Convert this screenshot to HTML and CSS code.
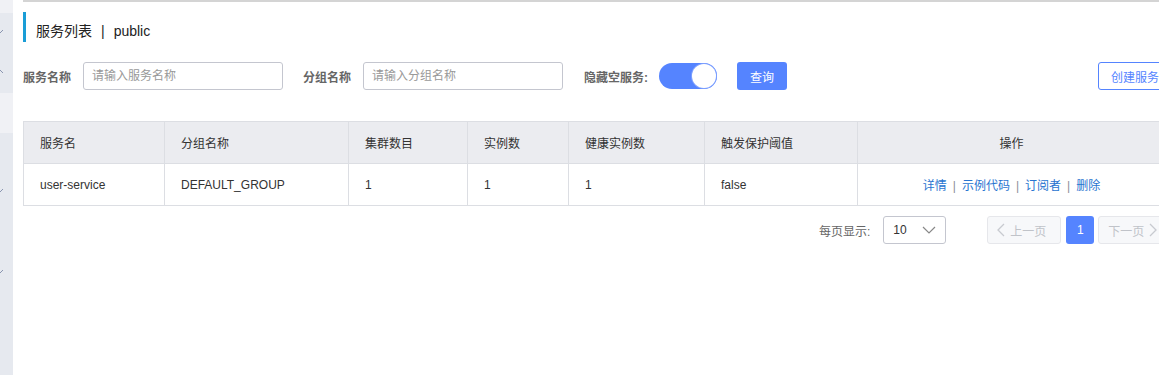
FILE: index.html
```html
<!DOCTYPE html>
<html lang="zh-CN">
<head>
  <meta charset="UTF-8">
  <title>服务列表</title>
  <link rel="stylesheet" href="styles.css">
</head>
<body>
  <div class="layout">
    <aside class="sidebar">
      <div class="band light" style="height:13px"></div>
      <div class="band dark" style="height:80px">
        <svg class="arrow" style="top:16px" width="6" height="6" viewBox="0 0 6 6"><path d="M-3 1 L0 4 L3 1" fill="none" stroke="#8a95b0" stroke-width="1"/></svg>
        <svg class="arrow" style="top:56px" width="6" height="6" viewBox="0 0 6 6"><path d="M-3 4 L0 1 L3 4" fill="none" stroke="#8a95b0" stroke-width="1"/></svg>
      </div>
      <div class="band light" style="height:40px"></div>
      <div class="band dark fill">
        <svg class="arrow" style="top:55px" width="6" height="6" viewBox="0 0 6 6"><path d="M-3 1 L0 4 L3 1" fill="none" stroke="#8a95b0" stroke-width="1"/></svg>
        <svg class="arrow" style="top:136px" width="6" height="6" viewBox="0 0 6 6"><path d="M-3 1 L0 4 L3 1" fill="none" stroke="#8a95b0" stroke-width="1"/></svg>
      </div>
    </aside>

    <main class="main">
      <div class="topline"></div>

      <h1 class="page-title">服务列表<span class="sep">|</span>public</h1>

      <div class="filters">
        <label class="field-label">服务名称</label>
        <input class="input" type="text" placeholder="请输入服务名称">
        <label class="field-label">分组名称</label>
        <input class="input" type="text" placeholder="请输入分组名称">
        <label class="field-label switch-label">隐藏空服务:</label>
        <span class="switch"><span class="knob"></span></span>
        <button class="btn primary">查询</button>
        <button class="btn outline create">创建服务</button>
      </div>

      <table class="table">
        <thead>
          <tr>
            <th class="c1">服务名</th>
            <th class="c2">分组名称</th>
            <th class="c3">集群数目</th>
            <th class="c4">实例数</th>
            <th class="c5">健康实例数</th>
            <th class="c6">触发保护阈值</th>
            <th class="c7 center">操作</th>
          </tr>
        </thead>
        <tbody>
          <tr>
            <td>user-service</td>
            <td>DEFAULT_GROUP</td>
            <td>1</td>
            <td>1</td>
            <td>1</td>
            <td>false</td>
            <td class="center ops">
              <a href="#">详情</a><span class="bar">|</span><a href="#">示例代码</a><span class="bar">|</span><a href="#">订阅者</a><span class="bar">|</span><a href="#">删除</a>
            </td>
          </tr>
        </tbody>
      </table>

      <div class="pager">
        <span class="pager-label">每页显示:</span>
        <div class="select">
          <span>10</span>
          <svg width="14" height="8" viewBox="0 0 14 8"><path d="M1 1 L7 7 L13 1" fill="none" stroke="#888" stroke-width="1.2"/></svg>
        </div>
        <button class="page-btn disabled prev">
          <svg width="8" height="14" viewBox="0 0 8 14"><path d="M7 1 L1 7 L7 13" fill="none" stroke="#c8cad0" stroke-width="1.3"/></svg>
          上一页
        </button>
        <button class="page-btn current">1</button>
        <button class="page-btn disabled next">
          下一页
          <svg width="8" height="14" viewBox="0 0 8 14"><path d="M1 1 L7 7 L1 13" fill="none" stroke="#c8cad0" stroke-width="1.3"/></svg>
        </button>
      </div>
    </main>
  </div>
</body>
</html>
```

FILE: styles.css
```css
html, body {
  margin: 0;
  padding: 0;
  background: #fff;
  overflow: hidden;
}

body {
  font-family: "Liberation Sans", "Noto Sans CJK SC", sans-serif;
  font-size: 12px;
  color: #333;
}

.layout {
  display: flex;
  width: 1166px;
  height: 375px;
}

/* left menu, mostly scrolled out of view */
.sidebar {
  width: 13px;
  flex-shrink: 0;
  display: flex;
  flex-direction: column;
}

.band {
  position: relative;
}

.band.light {
  background: #f0f1f5;
}

.band.dark {
  background: #e6e9ef;
}

.band.fill {
  flex: 1;
}

.arrow {
  position: absolute;
  left: 0;
}

.main {
  flex: 1;
  padding: 0 0 0 10px;
  min-width: 0;
}

.topline {
  height: 2px;
  background: #d4d4d4;
}

.page-title {
  margin: 10px 0 0;
  height: 30px;
  border-left: 3px solid #1a9dd6;
  padding: 9px 0 0 10px;
  box-sizing: border-box;
  font-size: 14px;
  font-weight: normal;
  line-height: 20px;
  color: #222;
}

.page-title .sep {
  margin: 0 9px;
}

.filters {
  display: flex;
  align-items: center;
  margin-top: 20px;
  height: 28px;
}

.field-label {
  font-weight: bold;
  color: #666;
  margin-right: 12px;
}

.input {
  width: 200px;
  height: 28px;
  box-sizing: border-box;
  border: 1px solid #c4c6cf;
  border-radius: 3px;
  padding: 0 8px;
  font-family: inherit;
  font-size: 12px;
  margin-right: 20px;
  outline: none;
}

.input::placeholder {
  color: #999;
}

.switch-label {
  margin-left: 1px;
  margin-right: 11px;
}

.switch {
  position: relative;
  width: 58px;
  height: 26px;
  border-radius: 13px;
  background: #5584ff;
  margin-right: 20px;
}

.switch .knob {
  position: absolute;
  right: 1px;
  top: 1px;
  width: 24px;
  height: 24px;
  border-radius: 50%;
  background: #fff;
  box-shadow: 0 0 0 1px #7fa1ff;
}

.btn {
  height: 28px;
  padding: 0 13px;
  border-radius: 3px;
  font-family: inherit;
  font-size: 12px;
  cursor: pointer;
}

.btn.primary {
  background: #5584ff;
  color: #fff;
  border: none;
  width: 50px;
  padding: 0;
}

.btn.outline {
  background: #fff;
  color: #5584ff;
  border: 1px solid #5584ff;
}

.create {
  margin-left: auto;
  width: 68px;
  padding: 0 0 0 12px;
  text-align: left;
  white-space: nowrap;
  overflow: hidden;
}

.table {
  margin-top: 31px;
  width: 100%;
  border-collapse: collapse;
  border: 1px solid #dcdee3;
}

.table th,
.table td {
  height: 41px;
  padding: 0 16px;
  text-align: left;
  font-weight: normal;
  border: 1px solid #dcdee3;
  color: #333;
}

.table th {
  background: #ebecf0;
}

.table .center {
  text-align: center;
}

.c1 { width: 108px; }
.c2 { width: 151px; }
.c3 { width: 86px; }
.c4 { width: 68px; }
.c5 { width: 103px; }
.c6 { width: 120px; }

.ops a {
  color: #2874d0;
  text-decoration: none;
}

.ops .bar {
  color: #8a8f99;
  margin: 0 6px;
}

.pager {
  display: flex;
  align-items: center;
  margin-top: 10px;
  height: 28px;
  padding-left: 796px;
  white-space: nowrap;
}

.pager > * {
  flex-shrink: 0;
}

.pager-label {
  color: #666;
  margin-right: 13px;
}

.select {
  width: 63px;
  height: 28px;
  box-sizing: border-box;
  border: 1px solid #c4c6cf;
  border-radius: 3px;
  display: flex;
  align-items: center;
  justify-content: space-between;
  padding: 0 9px 0 9px;
  color: #333;
  margin-right: 41px;
}

.page-btn {
  height: 28px;
  box-sizing: border-box;
  border-radius: 3px;
  font-family: inherit;
  font-size: 12px;
  display: flex;
  align-items: center;
  gap: 5px;
  padding: 0 9px;
}

.page-btn.disabled {
  background: #f7f8fa;
  border: 1px solid #e6e7eb;
  color: #c0c3c9;
}

.prev {
  width: 74px;
}

.current {
  width: 28px;
  justify-content: center;
  background: #5584ff;
  border: none;
  color: #fff;
  margin: 0 4px 0 5px;
}

.next {
  width: 70px;
}
```
